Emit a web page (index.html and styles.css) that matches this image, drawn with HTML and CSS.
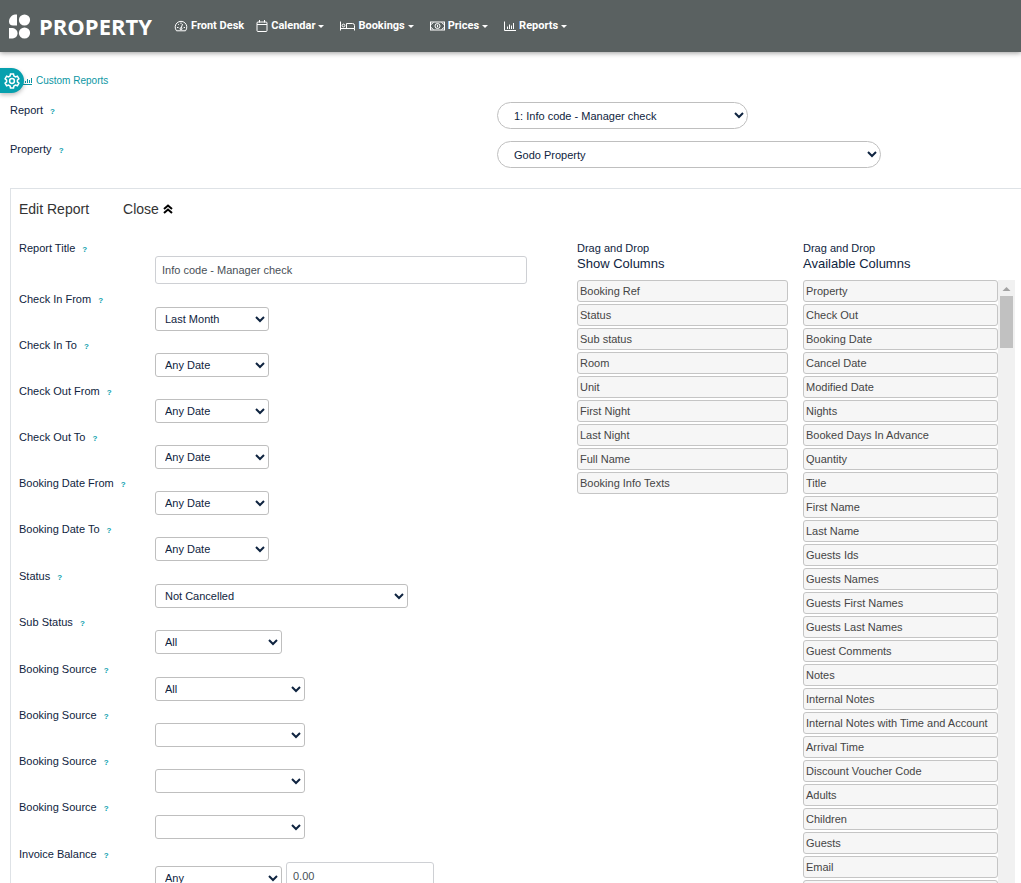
FILE: index.html
```html
<!DOCTYPE html>
<html lang="en">
<head>
    <meta charset="UTF-8">
    <meta name="viewport" content="width=device-width, initial-scale=1.0">
    <title>Custom Reports</title>
    <link rel="stylesheet" href="styles.css">
</head>
<body>
    <header class="topbar">
        <a href="#" class="brand">
            <svg class="brand-logo" viewBox="0 0 22 25" aria-hidden="true">
                <path d="M8 0.500H6C2.500 1 0 4 0 7.500C0 10 1.500 11.500 4 11.500H8Z"/>
                <circle cx="15.500" cy="6" r="5.600"/>
                <path d="M0 14H2C6 14 8.500 16 8.500 19.200C8.500 22.500 6 24.500 2 24.500H0Z"/>
                <circle cx="15.500" cy="19" r="5.600"/>
            </svg>
            <span>PROPERTY</span>
        </a>
        <nav class="menu">
            <a href="#" class="menu-link">
                <svg class="icon" viewBox="0 0 14 12" aria-hidden="true"><path d="M2.500 10.800A5.800 5.800 0 1 1 11.500 10.800Z"/><path d="M7 8.500L8.500 4M3 7.500H4.500M9.700 7.500H11M4.200 4.200L5 5M7 2.500V4"/><circle cx="7" cy="8.700" r="1"/></svg>
                Front Desk
            </a>
            <a href="#" class="menu-link">
                <svg class="icon icon-narrow" viewBox="0 0 11 12" aria-hidden="true"><rect x="0.500" y="2" width="10" height="9.500" rx="1"/><path d="M0.500 4.500H10.500M3 0V2.500M8 0V2.500"/></svg>
                Calendar <span class="caret"></span>
            </a>
            <a href="#" class="menu-link">
                <svg class="icon icon-wide" viewBox="0 0 15 12" aria-hidden="true"><path d="M0.500 1.500V10.500M0.500 8.500H14.500V10.500M14.500 8.500V5.500Q14.500 3.500 12.500 3.500H6.500V8.500"/><circle cx="3.500" cy="5.500" r="1.400"/></svg>
                Bookings <span class="caret"></span>
            </a>
            <a href="#" class="menu-link">
                <svg class="icon icon-wide" viewBox="0 0 15 12" aria-hidden="true"><rect x="0.500" y="2" width="14" height="8"/><circle cx="7.500" cy="6" r="2.500"/><path d="M7.500 4.700V7.300M1 4.500L3.500 2.500M1 7.500L3.500 9.500M14 4.500L11.500 2.500M14 7.500L11.500 9.500"/></svg>
                Prices <span class="caret"></span>
            </a>
            <a href="#" class="menu-link">
                <svg class="icon icon-narrow" viewBox="0 0 12 12" aria-hidden="true"><path d="M0.500 1.500V10.500H12M3.500 9V6.500M5.500 9V4.500M7.500 9V5.500M9.500 9V3"/></svg>
                Reports <span class="caret"></span>
            </a>
        </nav>
    </header>

    <button type="button" class="settings-tab" aria-label="Settings">
        <svg viewBox="0 0 16 16" aria-hidden="true"><path d="M6.500 1h3l.4 2 1.600.9 1.900-.7 1.500 2.600-1.500 1.300v1.800l1.500 1.300-1.500 2.600-1.900-.7-1.600.9-.4 2h-3l-.4-2-1.600-.9-1.900.7-1.500-2.600 1.500-1.300V7.100L1.100 5.800l1.500-2.600 1.900.7L6.100 3z"/><circle cx="8" cy="8" r="2.400"/></svg>
    </button>

    <main class="page">
        <a href="#" class="crumb">
            <svg class="crumb-icon" viewBox="0 0 10 8" aria-hidden="true"><path d="M0 7.500H9M2.500 6V4M4.500 6V2M6.500 6V3M8.500 6V1"/></svg>
            Custom Reports
        </a>

        <div class="filter">
            <label for="report">Report <span class="help">?</span></label>
            <select id="report" class="pill w-251"><option>1: Info code - Manager check</option></select>
        </div>
        <div class="filter">
            <label for="property">Property <span class="help">?</span></label>
            <select id="property" class="pill w-384"><option>Godo Property</option></select>
        </div>

        <section class="panel">
            <div class="panel-head">
                <h2>Edit Report</h2>
                <button type="button" class="close">Close
                    <svg viewBox="0 0 10 10" aria-hidden="true"><path d="M1 5L5 1.500L9 5M1 9L5 5.500L9 9"/></svg>
                </button>
            </div>

            <div class="columns">
                <form class="fields">
                    <div class="group">
                        <div class="field">
                            <label for="title">Report Title <span class="help">?</span></label>
                            <div class="control"><input type="text" id="title" class="w-372" value="Info code - Manager check"></div>
                        </div>
                    </div>

                    <!-- Dates -->
                    <div class="group">
                        <div class="field">
                            <label for="in-from">Check In From <span class="help">?</span></label>
                            <div class="control"><select id="in-from" class="w-114"><option>Last Month</option></select></div>
                        </div>
                        <div class="field">
                            <label for="in-to">Check In To <span class="help">?</span></label>
                            <div class="control"><select id="in-to" class="w-114"><option>Any Date</option></select></div>
                        </div>
                        <div class="field">
                            <label for="out-from">Check Out From <span class="help">?</span></label>
                            <div class="control"><select id="out-from" class="w-114"><option>Any Date</option></select></div>
                        </div>
                        <div class="field">
                            <label for="out-to">Check Out To <span class="help">?</span></label>
                            <div class="control"><select id="out-to" class="w-114"><option>Any Date</option></select></div>
                        </div>
                        <div class="field">
                            <label for="booked-from">Booking Date From <span class="help">?</span></label>
                            <div class="control"><select id="booked-from" class="w-114"><option>Any Date</option></select></div>
                        </div>
                        <div class="field">
                            <label for="booked-to">Booking Date To <span class="help">?</span></label>
                            <div class="control"><select id="booked-to" class="w-114"><option>Any Date</option></select></div>
                        </div>
                    </div>

                    <!-- Status -->
                    <div class="group">
                        <div class="field">
                            <label for="status">Status <span class="help">?</span></label>
                            <div class="control"><select id="status" class="w-253"><option>Not Cancelled</option></select></div>
                        </div>
                        <div class="field">
                            <label for="sub-status">Sub Status <span class="help">?</span></label>
                            <div class="control"><select id="sub-status" class="w-127"><option>All</option></select></div>
                        </div>
                    </div>

                    <!-- Sources -->
                    <div class="group">
                        <div class="field">
                            <label for="source-1">Booking Source <span class="help">?</span></label>
                            <div class="control"><select id="source-1" class="w-150"><option>All</option></select></div>
                        </div>
                        <div class="field">
                            <label for="source-2">Booking Source <span class="help">?</span></label>
                            <div class="control"><select id="source-2" class="w-150"><option></option></select></div>
                        </div>
                        <div class="field">
                            <label for="source-3">Booking Source <span class="help">?</span></label>
                            <div class="control"><select id="source-3" class="w-150"><option></option></select></div>
                        </div>
                        <div class="field">
                            <label for="source-4">Booking Source <span class="help">?</span></label>
                            <div class="control"><select id="source-4" class="w-150"><option></option></select></div>
                        </div>
                    </div>

                    <div class="group">
                        <div class="field">
                            <label for="balance">Invoice Balance <span class="help">?</span></label>
                            <div class="control">
                                <select id="balance" class="w-127"><option>Any</option></select>
                                <input type="text" class="w-148" value="0.00" aria-label="Amount">
                            </div>
                        </div>
                    </div>
                </form>

                <div class="picker">
                    <p>Drag and Drop</p>
                    <h3>Show Columns</h3>
                    <ul class="list">
                        <li>Booking Ref</li>
                        <li>Status</li>
                        <li>Sub status</li>
                        <li>Room</li>
                        <li>Unit</li>
                        <li>First Night</li>
                        <li>Last Night</li>
                        <li>Full Name</li>
                        <li>Booking Info Texts</li>
                    </ul>
                </div>

                <div class="picker">
                    <p>Drag and Drop</p>
                    <h3>Available Columns</h3>
                    <div class="scroller">
                        <ul class="list">
                            <li>Property</li>
                            <li>Check Out</li>
                            <li>Booking Date</li>
                            <li>Cancel Date</li>
                            <li>Modified Date</li>
                            <li>Nights</li>
                            <li>Booked Days In Advance</li>
                            <li>Quantity</li>
                            <li>Title</li>
                            <li>First Name</li>
                            <li>Last Name</li>
                            <li>Guests Ids</li>
                            <li>Guests Names</li>
                            <li>Guests First Names</li>
                            <li>Guests Last Names</li>
                            <li>Guest Comments</li>
                            <li>Notes</li>
                            <li>Internal Notes</li>
                            <li>Internal Notes with Time and Account</li>
                            <li>Arrival Time</li>
                            <li>Discount Voucher Code</li>
                            <li>Adults</li>
                            <li>Children</li>
                            <li>Guests</li>
                            <li>Email</li>
                            <li></li>
                        </ul>
                        <div class="scrollbar" aria-hidden="true">
                            <svg class="scroll-up" viewBox="0 0 13 16"><path d="M2.500 11L6.500 7L10.500 11Z"/></svg>
                            <div class="scroll-thumb"></div>
                        </div>
                    </div>
                </div>
            </div>
        </section>
    </main>
</body>
</html>
```
FILE: styles.css
```css
* { box-sizing: border-box; }

body {
    margin: 0;
    font-family: "Liberation Sans", Arial, sans-serif;
    font-size: 11px;
    line-height: 16px;
    color: #0f2440;
    background: #fff;
}
a { text-decoration: none; }
h2, h3, p, ul { margin: 0; padding: 0; font-weight: normal; }
svg { fill: none; stroke: currentColor; }

/* Top bar */
.topbar {
    display: flex;
    align-items: center;
    gap: 22px;
    height: 52px;
    padding-left: 9px;
    background: #5a6161;
    box-shadow: 0 1px 5px rgba(0, 0, 0, 0.4);
}
.brand {
    display: flex;
    align-items: center;
    gap: 8px;
    color: #fff;
    font: bold 22px/28px "Open Sans", sans-serif;
}
.brand-logo { width: 22px; height: 25px; fill: #fff; stroke: none; }
.menu { display: flex; gap: 12px; }
.menu-link {
    display: flex;
    align-items: center;
    gap: 3px;
    color: #fff;
    font-family: Roboto, Arial, sans-serif;
    font-weight: bold;
}
.icon { width: 14px; height: 12px; }
.icon-narrow { width: 12px; }
.icon-wide { width: 15px; }
.caret {
    margin-right: 4px;
    border: 3px solid transparent;
    border-top-color: #fff;
    border-bottom: 0;
}

.settings-tab {
    position: absolute;
    top: 68px;
    left: 0;
    width: 24px; height: 25px;
    padding: 4px;
    border: 0;
    border-radius: 0 13px 13px 0;
    background: #06a0ae;
    color: #fff;
    box-shadow: 0 2px 4px rgba(0, 0, 0, 0.25);
}
.settings-tab svg { display: block; width: 16px; height: 16px; stroke-width: 1.5; }

/* Page */
.page { padding: 21px 0 0 10px; }
.crumb {
    display: flex;
    align-items: center;
    gap: 3px;
    padding-left: 13px;
    margin-bottom: 13px;
    font-size: 10px;
    color: #0b96a3;
}
.crumb-icon { width: 10px; height: 8px; }
.help {
    margin-left: 4px;
    font-size: 8px;
    line-height: 8px;
    font-weight: bold;
    color: #0ba0ac;
}
.filter {
    display: grid;
    grid-template-columns: 487px auto;
    margin-bottom: 12px;
}

select, input {
    height: 24px;
    padding: 0 5px;
    border: 1px solid #bfbfbf;
    border-radius: 3px;
    background: #fff;
    color: #0f2440;
    font-family: inherit;
    font-size: 11px;
}
input {
    height: 28px;
    padding: 0 6px;
    border-color: #ced0d4;
    color: #495057;
}
.pill {
    height: 27px;
    padding: 0 5px 0 12px;
    border-radius: 14px;
}
.w-114 { width: 114px; }
.w-127 { width: 127px; }
.w-148 { width: 148px; }
.w-150 { width: 150px; }
.w-251 { width: 251px; }
.w-253 { width: 253px; }
.w-372 { width: 372px; }
.w-384 { width: 384px; }

/* Edit report panel */
.panel {
    margin-top: 20px;
    padding: 10px 6px 20px 8px;
    border: 1px solid #dee2e6;
    border-right: 0;
}
.panel-head {
    display: flex;
    gap: 34px;
    margin-bottom: 21px;
}
.panel-head h2, .close {
    font-size: 14px;
    line-height: 20px;
    color: #333;
}
.close {
    display: flex;
    align-items: center;
    gap: 4px;
    padding: 0;
    border: 0;
    background: none;
    font-family: inherit;
}
.close svg { width: 10px; height: 10px; color: #000; stroke-width: 2; }
.columns {
    display: grid;
    grid-template-columns: 1fr 211px 212px;
    gap: 15px;
}
.fields { display: flex; flex-direction: column; gap: 7px; }
.group { display: flex; flex-direction: column; gap: 6px; }
.field label { display: block; }
.control {
    display: flex;
    align-items: end;
    gap: 4px;
    padding-left: 136px;
}

/* Column lists */
.picker h3 { font-size: 13px; margin-bottom: 8px; }
.list {
    flex: 1;
    list-style: none;
}
.list li {
    height: 22px;
    margin-bottom: 2px;
    padding: 2px;
    border: 1px solid #c5c5c5;
    border-radius: 3px;
    background: #f6f6f6;
    color: #454545;
}
.scroller { display: flex; }
.scrollbar {
    width: 17px;
    padding: 0 2px;
    background: #f1f1f1;
}
.scroll-up { display: block; width: 13px; height: 16px; fill: #a3a3a3; stroke: none; }
.scroll-thumb { height: 52px; background: #c1c1c1; }
```
